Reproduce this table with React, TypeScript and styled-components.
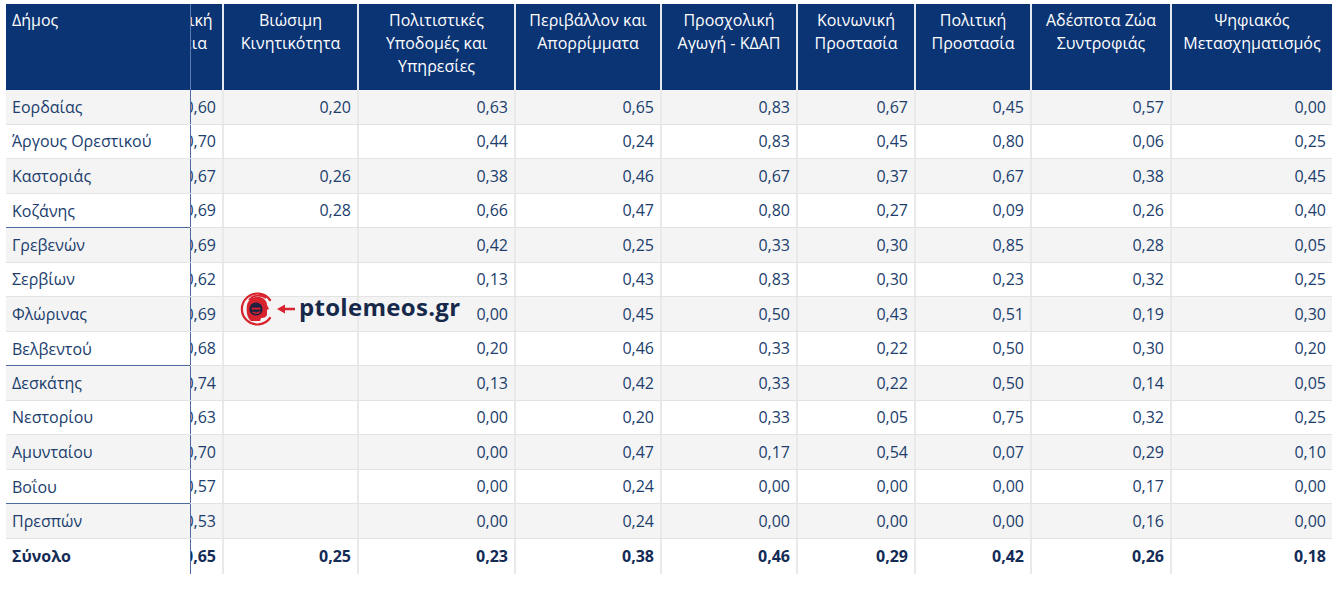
import React from "react";
import styled, { createGlobalStyle } from "styled-components";

const GlobalStyle = createGlobalStyle`
  body {
    margin: 0;
    background: #ffffff;
    font-family: "Open Sans", "Noto Sans", sans-serif;
  }
`;

const COLS = "184px 32px 135px 157px 146px 136px 118px 116px 140px 162px";

const Page = styled.div`
  padding: 4px 0 0 6px;
`;

const Table = styled.div`
  position: relative;
  width: 1326px;
`;

const HeaderRow = styled.div`
  display: grid;
  grid-template-columns: ${COLS};
  height: 86px;
  background: #0b3474;
`;

const HeadCell = styled.div<{ $left?: boolean }>`
  color: #ffffff;
  font-size: 16px;
  line-height: 23px;
  padding: 5px 6px 0 6px;
  text-align: ${(p) => (p.$left ? "left" : "center")};
  border-left: ${(p) => (p.$left ? "none" : "2px solid #e4e9f1")};
`;

const ClipHead = styled.div`
  display: flex;
  justify-content: flex-end;
  overflow: hidden;
  color: #ffffff;
  font-size: 16px;
  line-height: 23px;
  padding-top: 5px;
  border-left: 1px solid #5a7ab0;
`;

const ClipText = styled.div`
  flex: 0 0 96px;
  text-align: center;
  white-space: nowrap;
`;

const Row = styled.div<{ $shade?: boolean; $total?: boolean }>`
  display: grid;
  grid-template-columns: ${COLS};
  height: ${(p) => (p.$total ? "35px" : "34.5px")};
  background: ${(p) => (p.$shade ? "#f4f4f4" : "#ffffff")};
  border-bottom: ${(p) => (p.$total ? "none" : "1px solid #e3e3e3")};
  box-sizing: border-box;
  font-weight: ${(p) => (p.$total ? 700 : 400)};
  color: ${(p) => (p.$total ? "#142b55" : "#203d6d")};
`;

const NameCell = styled.div<{ $rule?: boolean }>`
  display: flex;
  align-items: center;
  padding-left: 6px;
  font-size: 16px;
  white-space: nowrap;
  box-shadow: ${(p) => (p.$rule ? "inset 0 -1px 0 #4d6b9e" : "none")};
  margin-bottom: ${(p) => (p.$rule ? "-1px" : "0")};
`;

const NumCell = styled.div<{ $clip?: boolean }>`
  display: flex;
  align-items: center;
  justify-content: flex-end;
  padding-right: 6px;
  font-size: 16px;
  overflow: hidden;
  white-space: nowrap;
  border-left: ${(p) => (p.$clip ? "1px solid #4d6b9e" : "2px solid #e9e9e9")};
`;

const Watermark = styled.div`
  position: absolute;
  left: 233px;
  top: 286px;
  display: flex;
  align-items: center;
`;

const Brand = styled.span`
  font-family: "Open Sans", sans-serif;
  font-weight: 700;
  font-size: 24px;
  color: #17294b;
  letter-spacing: 0.3px;
  line-height: 1;
  margin: -5px 0 0 2px;
`;

const headers = [
  "Βιώσιμη Κινητικότητα",
  "Πολιτιστικές Υποδομές και Υπηρεσίες",
  "Περιβάλλον και Απορρίμματα",
  "Προσχολική Αγωγή - ΚΔΑΠ",
  "Κοινωνική Προστασία",
  "Πολιτική Προστασία",
  "Αδέσποτα Ζώα Συντροφιάς",
  "Ψηφιακός Μετασχηματισμός",
];

type Rec = [string, string, string, string[]];

const rows: Rec[] = [
  ["Εορδαίας", "0,60", "0,20", ["0,63", "0,65", "0,83", "0,67", "0,45", "0,57", "0,00"]],
  ["Άργους Ορεστικού", "0,70", "", ["0,44", "0,24", "0,83", "0,45", "0,80", "0,06", "0,25"]],
  ["Καστοριάς", "0,67", "0,26", ["0,38", "0,46", "0,67", "0,37", "0,67", "0,38", "0,45"]],
  ["Κοζάνης", "0,69", "0,28", ["0,66", "0,47", "0,80", "0,27", "0,09", "0,26", "0,40"]],
  ["Γρεβενών", "0,69", "", ["0,42", "0,25", "0,33", "0,30", "0,85", "0,28", "0,05"]],
  ["Σερβίων", "0,62", "", ["0,13", "0,43", "0,83", "0,30", "0,23", "0,32", "0,25"]],
  ["Φλώρινας", "0,69", "", ["0,00", "0,45", "0,50", "0,43", "0,51", "0,19", "0,30"]],
  ["Βελβεντού", "0,68", "", ["0,20", "0,46", "0,33", "0,22", "0,50", "0,30", "0,20"]],
  ["Δεσκάτης", "0,74", "", ["0,13", "0,42", "0,33", "0,22", "0,50", "0,14", "0,05"]],
  ["Νεστορίου", "0,63", "", ["0,00", "0,20", "0,33", "0,05", "0,75", "0,32", "0,25"]],
  ["Αμυνταίου", "0,70", "", ["0,00", "0,47", "0,17", "0,54", "0,07", "0,29", "0,10"]],
  ["Βοΐου", "0,57", "", ["0,00", "0,24", "0,00", "0,00", "0,00", "0,17", "0,00"]],
  ["Πρεσπών", "0,53", "", ["0,00", "0,24", "0,00", "0,00", "0,00", "0,16", "0,00"]],
];

const total: Rec = ["Σύνολο", "0,65", "0,25", ["0,23", "0,38", "0,46", "0,29", "0,42", "0,26", "0,18"]];

const Logo = () => (
  <svg width="38" height="38" viewBox="0 0 38 38">
    {/* open ring */}
    <path
      d="M31 10 A15.5 15.5 0 1 0 31 28"
      fill="none"
      stroke="#d8232f"
      strokeWidth="2.2"
      strokeLinecap="round"
    />
    {/* helmeted head */}
    <path
      d="M8 15 C9 9 15 6 21 7 C25 8 28 11 28 15 L30 19 L28 20 L28 24 C28 27 25 28 22 28 L21 31 L12 31 C8 28 7 21 8 15 Z"
      fill="#d8232f"
    />
    <path d="M10 10 C14 5 22 4 27 8" fill="none" stroke="#d8232f" strokeWidth="2" />
    {/* e mark */}
    <circle cx="17" cy="19" r="6.6" fill="#1e2140" />
    <path d="M12.6 18.6 H21.4" stroke="#d8232f" strokeWidth="1.8" />
    <path d="M21 21.5 C19 23.8 15.5 23.6 13.5 21.8" stroke="#d8232f" strokeWidth="1.4" fill="none" />
  </svg>
);

const Arrow = () => (
  <svg width="20" height="12" viewBox="0 0 20 12">
    <path d="M0 6 L8 1.5 L8 4.8 L18 4.8 L18 7.2 L8 7.2 L8 10.5 Z" fill="#d8232f" />
  </svg>
);

const DataRow = ({ rec, i, isTotal }: { rec: Rec; i: number; isTotal?: boolean }) => (
  <Row $shade={!isTotal && i % 2 === 0} $total={isTotal}>
    <NameCell $rule={!isTotal && (i === 3 || i === 7 || i === 11)}>{rec[0]}</NameCell>
    <NumCell $clip>{rec[1]}</NumCell>
    <NumCell>{rec[2]}</NumCell>
    {rec[3].map((v, k) => (
      <NumCell key={k}>{v}</NumCell>
    ))}
  </Row>
);

const App = () => {
  return (
    <Page>
      <GlobalStyle />
      <Table>
        <HeaderRow>
          <HeadCell $left>Δήμος</HeadCell>
          <ClipHead>
            <ClipText>
              Ηλεκτρική
              <br />
              Ενέργεια
            </ClipText>
          </ClipHead>
          {headers.map((h) => (
            <HeadCell key={h}>{h}</HeadCell>
          ))}
        </HeaderRow>
        {rows.map((r, i) => (
          <DataRow key={r[0]} rec={r} i={i} />
        ))}
        <DataRow rec={total} i={13} isTotal />
        <Watermark>
          <Logo />
          <Arrow />
          <Brand>ptolemeos.gr</Brand>
        </Watermark>
      </Table>
    </Page>
  );
};

export default App;
